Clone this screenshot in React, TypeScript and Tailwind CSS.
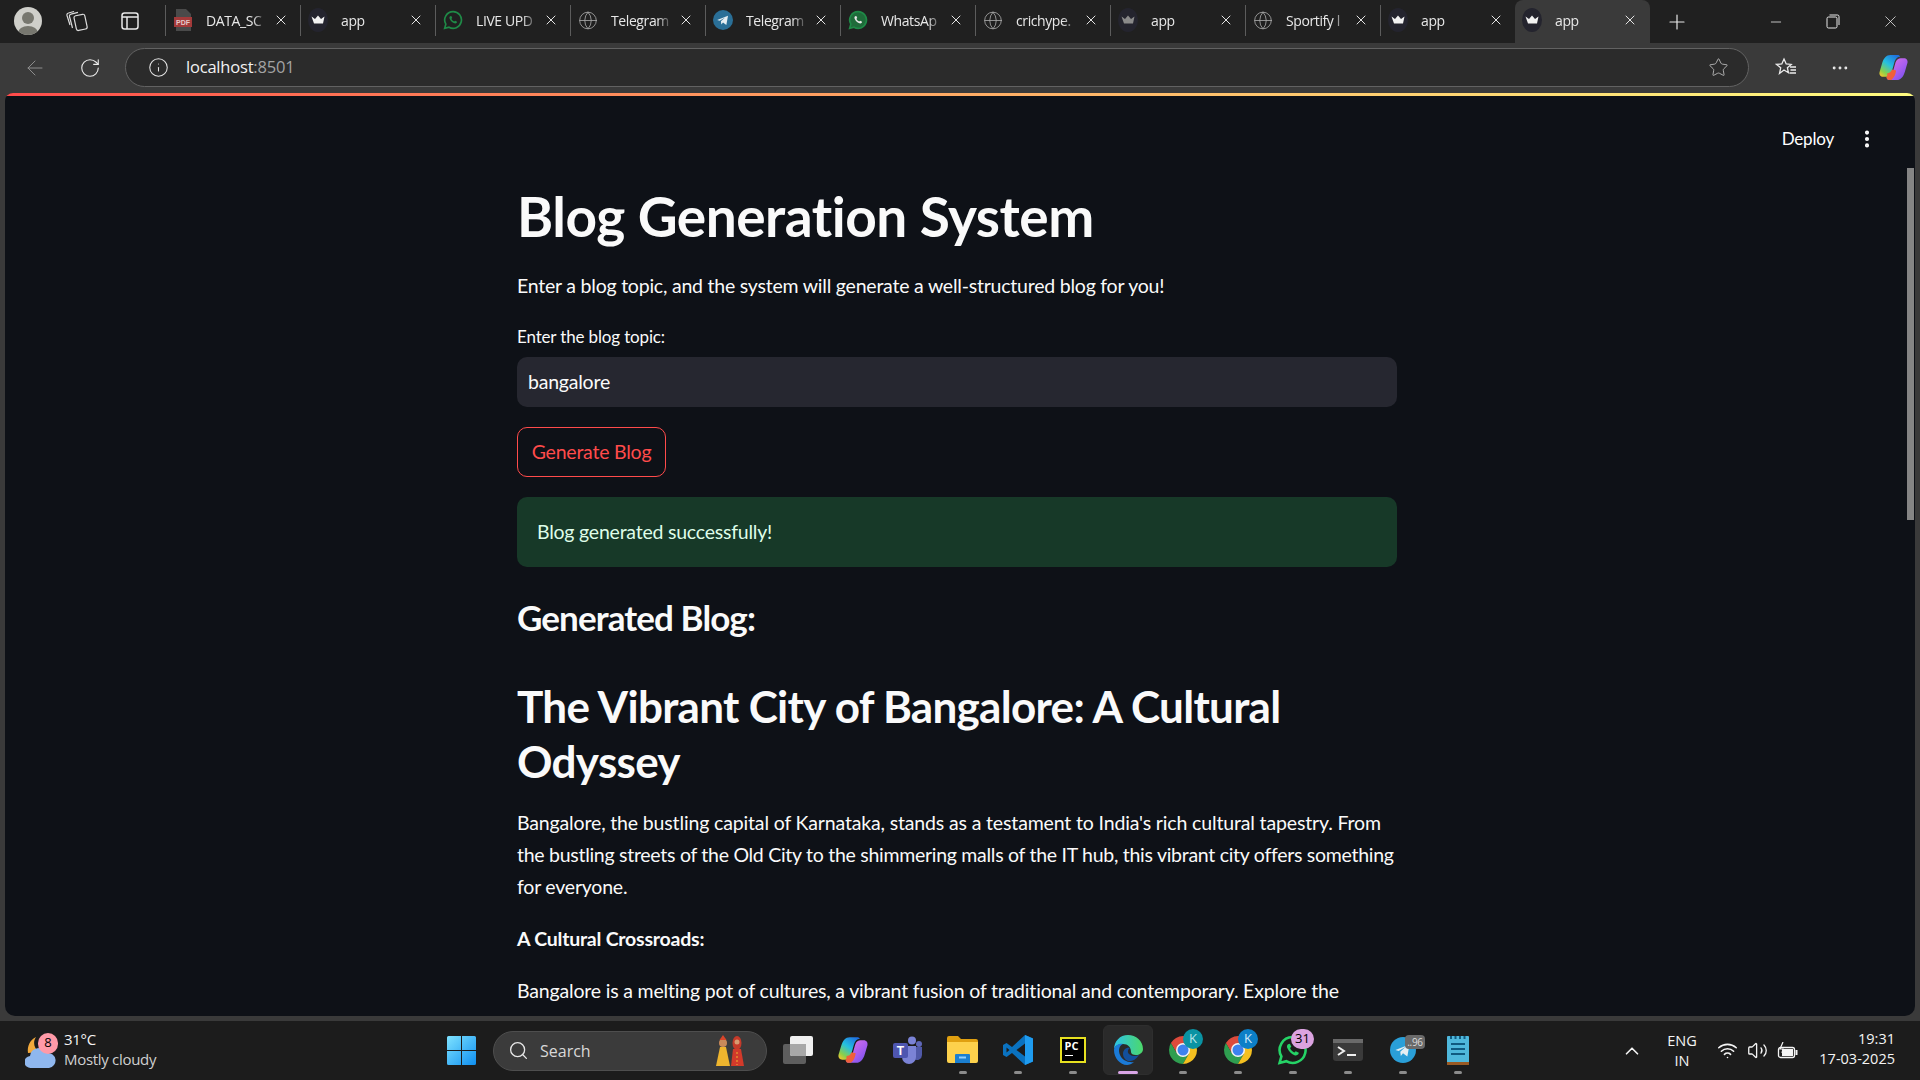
import React from 'react';
import { ArrowLeft, ChevronUp, Info, Minus, MoreHorizontal, MoreVertical, Plus, RotateCw, Search, Star, Volume2, Wifi, X, Globe } from 'lucide-react';

type TabIcon = 'pdf' | 'crown' | 'crownDim' | 'whatsapp' | 'globe' | 'telegram';

const tabs: { icon: TabIcon; title: string; active?: boolean }[] = [
    { icon: 'pdf', title: 'DATA_SC' },
    { icon: 'crown', title: 'app' },
    { icon: 'whatsapp', title: 'LIVE UPD' },
    { icon: 'globe', title: 'Telegram' },
    { icon: 'telegram', title: 'Telegram' },
    { icon: 'whatsapp', title: 'WhatsAp' },
    { icon: 'globe', title: 'crichype.' },
    { icon: 'crownDim', title: 'app' },
    { icon: 'globe', title: 'Sportify l' },
    { icon: 'crown', title: 'app' },
    { icon: 'crown', title: 'app', active: true },
];

function Crown({ dim }: { dim?: boolean }) {
    return (
        <svg width="20" height="24" viewBox="0 0 20 24">
            <ellipse cx="10" cy="12" rx="10" ry="12" fill="#24242e" />
            <path d="M3.5 8.500 7 11l3-3.500 3 3.500 3.500-2.500-1.500 7h-9z" fill={dim ? '#8a8a8a' : '#f2f2f2'} />
        </svg>
    );
}

function WhatsAppIcon({ size = 20, dim }: { size?: number; dim?: boolean }) {
    return (
        <svg width={size} height={size} viewBox="0 0 24 24">
            <path d="M12 2a10 10 0 0 0-8.600 15L2 22l5.200-1.300A10 10 0 1 0 12 2z" fill={dim ? '#1f6b3a' : 'none'} stroke="#1f8a47" strokeWidth="2" />
            <path d="M8.500 7.500c-.8.700-1 1.800-.5 3 1 2.500 3 4.500 5.500 5.500 1.200.4 2.300.2 3-.7l.4-1.200-2.400-1.200-1 1c-1.500-.6-2.800-1.900-3.400-3.400l1-1-1.100-2.400z" fill={dim ? '#e8e8e8' : '#1f8a47'} />
        </svg>
    );
}

function TelegramIcon({ size = 20, fill = '#2a6f97' }: { size?: number; fill?: string }) {
    return (
        <svg width={size} height={size} viewBox="0 0 24 24">
            <circle cx="12" cy="12" r="12" fill={fill} />
            <path d="M5 12l13-5-2 11-4-3-2 2.500-.5-4 5-4.500-6.500 4z" fill="#e6eef2" />
        </svg>
    );
}

function Favicon({ icon, index }: { icon: TabIcon; index: number }) {
    if (icon === 'pdf') {
        return (
            <svg width="18" height="24" viewBox="0 0 18 24">
                <path d="M2 1h10l5 5v17H2z" fill="#4a4a4a" />
                <rect x="0" y="9" width="18" height="10" fill="#a33a3a" />
                <text x="9" y="17" textAnchor="middle" fontSize="7" fontWeight="700" fill="#e6c8c8" fontFamily="Liberation Sans">PDF</text>
            </svg>
        );
    }
    if (icon === 'crown') return <Crown />;
    if (icon === 'crownDim') return <Crown dim />;
    if (icon === 'whatsapp') return <WhatsAppIcon dim={index === 5} />;
    if (icon === 'telegram') return <TelegramIcon />;
    return <Globe size={21} strokeWidth={1} className="text-[#a8a8a8]" />;
}

function BrowserTab({ icon, title, active, index }: { icon: TabIcon; title: string; active?: boolean; index: number }) {
    return (
        <div className={`relative flex h-full w-[135px] shrink-0 items-center pb-[3px] ${active ? 'rounded-t-lg bg-[#3a3a3a]' : ''}`}>
            {!active && <div className="h-[31px] w-px bg-[#5c5c5c]" />}
            <div className="ml-[7px] flex w-[20px] justify-center">
                <Favicon icon={icon} index={index} />
            </div>
            <span className="ml-[13px] w-[62px] whitespace-nowrap text-[14px] text-[#e8e8e8] [font-family:'Open_Sans',sans-serif] [mask-image:linear-gradient(90deg,#000_75%,transparent)] tracking-[-0.4px]">
                {title}
            </span>
            <X size={16} strokeWidth={1.5} className="ml-[5px] text-[#e4e4e4]" />
        </div>
    );
}

function TopBars() {
    return (
        <>
            <div className="flex h-[43px] shrink-0 items-center bg-[#202020]">
                <div className="flex h-full w-[165px] shrink-0 items-center pb-[1px]">
                    <div className="ml-[14px] flex h-[28px] w-[28px] items-end justify-center overflow-hidden rounded-full bg-[#cfcfca]">
                        <svg width="28" height="28" viewBox="0 0 28 28">
                            <circle cx="14" cy="11" r="6" fill="#77776f" />
                            <ellipse cx="14" cy="26" rx="10" ry="7" fill="#77776f" />
                        </svg>
                    </div>
                    <svg className="ml-[23px]" width="24" height="24" viewBox="0 0 24 24" fill="none" stroke="#dcdcdc" strokeWidth="1.200">
                        <rect x="10" y="6" width="11" height="15" rx="2" transform="rotate(-12 15 13)" />
                        <path d="M7.500 19 4.500 7.500a2 2 0 0 1 1.500-2.400l7-1.800" />
                        <path d="M5 16 2 6.500A2 2 0 0 1 3.500 4L9 2.500" />
                    </svg>
                    <svg className="ml-[32px]" width="18" height="18" viewBox="0 0 18 18" fill="none" stroke="#e8e8e8" strokeWidth="1.500">
                        <rect x="1" y="1" width="16" height="16" rx="2.500" />
                        <path d="M1 5h16M6 5v12" />
                    </svg>
                </div>
                {tabs.map((tab, i) => (
                    <BrowserTab key={i} index={i} {...tab} />
                ))}
                <Plus size={24} strokeWidth={1.2} className="ml-[15px] text-[#e8e8e8]" />
                <Minus size={16} strokeWidth={1.2} className="ml-[79px] text-[#e8e8e8]" />
                <svg className="ml-[42px]" width="14" height="15" viewBox="0 0 14 15" fill="none" stroke="#e8e8e8" strokeWidth="1">
                    <rect x="1" y="3" width="10" height="11" rx="1.500" />
                    <path d="M3.500 1h8a1.500 1.500 0 0 1 1.500 1.500V11" />
                </svg>
                <X size={19} strokeWidth={1} className="ml-[41px] text-[#e8e8e8]" />
            </div>
            <div className="flex h-[50px] shrink-0 items-center bg-[#3a3a3a] pb-[1px]">
                <ArrowLeft size={24} strokeWidth={1} className="ml-[23px] text-[#8d8d8d]" />
                <RotateCw size={22} strokeWidth={1.2} className="ml-[32px] text-[#ececec]" />
                <div className="ml-[24px] flex h-[39px] w-[1624px] items-center rounded-full border border-[#626262] bg-[#2b2b2b]">
                    <Info size={21} strokeWidth={1.200} className="ml-[22px] text-[#e4e4e4]" />
                    <span className="ml-[17px] text-[16.500px] tracking-[-0.2px] [font-family:'Open_Sans',sans-serif] text-[#f2f2f2]">
                        localhost<span className="text-[#a3a3a3]">:8501</span>
                    </span>
                    <Star size={21} strokeWidth={1} className="ml-auto mr-[19px] text-[#bdbdbd]" />
                </div>
                <svg className="ml-[26px]" width="22" height="22" viewBox="0 0 22 22" fill="none" stroke="#ececec" strokeWidth="1.300">
                    <path d="M9 2l2.200 5 5 .4-3.800 3.300 1 5L9 13l-4.500 3.500 1.200-5.700L1.500 7.400l5.300-.4z" />
                    <path d="M15 10h6M15.500 13h5.500M14.500 16h6.500" />
                </svg>
                <MoreHorizontal size={20} strokeWidth={1.5} className="ml-[33px] text-[#ececec]" />
                <div className="ml-[29px]">
                    <CopilotIcon size={29} id="cpTop" />
                </div>
            </div>
        </>
    );
}

function CopilotIcon({ size, id }: { size: number; id: string }) {
    return (
        <svg width={size} height={size} viewBox="0 0 28 28">
            <defs>
                <linearGradient id={`${id}a`} x1="0.8" y1="0" x2="0.1" y2="1">
                    <stop offset="0" stopColor="#1f6fe0" />
                    <stop offset="0.45" stopColor="#25c0e0" />
                    <stop offset="0.8" stopColor="#8ad04a" />
                    <stop offset="1" stopColor="#f5c52c" />
                </linearGradient>
                <linearGradient id={`${id}b`} x1="0" y1="0" x2="1" y2="1">
                    <stop offset="0" stopColor="#e676e2" />
                    <stop offset="0.6" stopColor="#a45cf0" />
                    <stop offset="1" stopColor="#6a50e8" />
                </linearGradient>
            </defs>
            <path d="M11 2h7c1 0 2 .6 2.500 1.500-3 0-4.500 2-5.500 5L12 19c-1 3-3 4-5 4H4c-2.500 0-4-2-3.500-4.500L3 10C4.500 5 7 2 11 2z" fill={`url(#${id}a)`} />
            <path d="M17 26h-7c-1 0-2-.6-2.500-1.500 3 0 4.500-2 5.500-5l3-10.500c1-3 3-4 5-4h3c2.500 0 4 2 3.500 4.500L25 18c-1.500 5-4 8-8 8z" fill={`url(#${id}b)`} />
            <path d="M8 19.500c2 0 3.500-1 4.500-3.500l4 1c-.5 4-2 7-4.500 9h-2c-1.500 0-2.500-1-3-2.500 1-.5 1-2.500 1-4z" fill="#f0603a" />
        </svg>
    );
}

function StreamlitPage() {
    return (
        <div className="relative min-h-0 flex-1 overflow-hidden rounded-t-[8px] rounded-b-[10px] bg-[#0e1117]">
            <div className="h-[3px] bg-gradient-to-r from-[#ff4b4b] to-[#fffd80]" />

            {/* Streamlit toolbar floats over the content */}
            <div className="absolute right-[37px] top-[33px] flex items-center text-white">
                <span className="text-[17px] tracking-[-0.2px] [font-family:'Lato',sans-serif]">Deploy</span>
                <MoreVertical size={22} strokeWidth={2.500} className="ml-[22px]" />
            </div>
            <div className="absolute right-[1px] top-[75px] h-[352px] w-[7px] bg-[#858585]" />

            <div className="ml-[512px] w-[880px] pt-[85px] text-[19.500px] leading-[32px] tracking-[-0.22px] text-[#fafafa] [font-family:'Lato',sans-serif] [font-variant-ligatures:none]">
                <h1 className="text-[55px] font-bold leading-[70px] tracking-[-0.5px]">Blog Generation System</h1>
                <p className="mt-[19px]">Enter a blog topic, and the system will generate a well-structured blog for you!</p>
                <label className="mt-[24px] block text-[17px] leading-[22px] tracking-[-0.15px]">Enter the blog topic:</label>
                <div className="mt-[9px] flex h-[50px] items-center rounded-[10px] bg-[#262730] pl-[11px]">bangalore</div>
                <button className="mt-[20px] block h-[50px] w-[149px] rounded-[10px] border border-[#ff4b4b] text-[#ff4b4b]">Generate Blog</button>
                <div className="mt-[20px] flex h-[70px] items-center rounded-[10px] bg-[#173928] pl-[20px] text-[#dffde9]">Blog generated successfully!</div>
                <h3 className="mt-[28px] text-[35px] font-bold leading-[44px] tracking-[-0.9px]">Generated Blog:</h3>
                <h2 className="mt-[40px] text-[44px] font-bold leading-[54.500px] tracking-[-0.7px]">The Vibrant City of Bangalore: A Cultural Odyssey</h2>
                <p className="mt-[19px] whitespace-nowrap">
                    <span className="tracking-[-0.15px]">Bangalore, the bustling capital of Karnataka, stands as a testament to India's rich cultural tapestry. From</span>
                    <br />
                    <span className="tracking-[-0.28px]">the bustling streets of the Old City to the shimmering malls of the IT hub, this vibrant city offers something</span>
                    <br />
                    for everyone.
                </p>
                <p className="mt-[20px] font-bold">A Cultural Crossroads:</p>
                <p className="mt-[20px] tracking-[-0.18px]">
                    Bangalore is a melting pot of cultures, a vibrant fusion of traditional and contemporary. Explore the majestic temples of the old city and the lively markets, or admire the colonial architecture of its gardens.
                </p>
            </div>
        </div>
    );
}

function Dot({ active }: { active?: boolean }) {
    return <div className={`absolute bottom-[6px] left-1/2 h-[3px] -translate-x-1/2 rounded-full ${active ? 'w-[20px] bg-[#d9a5e6]' : 'w-[8px] bg-[#8b8b8b]'}`} />;
}

function Pill({ text, color, textColor = 'text-black', className = 'left-[30px]' }: { text: string; color: string; textColor?: string; className?: string }) {
    return (
        <div className={`absolute top-[8px] flex h-[20px] w-[20px] items-center justify-center rounded-full text-[13px] ${color} ${textColor} ${className}`}>
            {text}
        </div>
    );
}

function ChromeIcon() {
    return (
        <svg width="30" height="30" viewBox="0 0 30 30">
            <path d="M2.880 8A14 14 0 0 1 27.120 8H15L8.940 18.500Z" fill="#dd4a3c" />
            <path d="M2.880 8A14 14 0 0 0 15 29L21.060 18.500 8.940 18.500Z" fill="#2f9e50" />
            <path d="M15 29A14 14 0 0 0 27.120 8H15L21.060 18.500Z" fill="#f4c020" />
            <circle cx="15" cy="15" r="7" fill="#f4f4f4" />
            <circle cx="15" cy="15" r="5.500" fill="#3d82ee" />
        </svg>
    );
}

function TaskSlot({ children, dot = true }: { children: React.ReactNode; dot?: boolean }) {
    return (
        <div className="relative flex h-full w-[55px] shrink-0 items-center justify-center pb-[2px]">
            {children}
            {dot && <Dot />}
        </div>
    );
}

function Taskbar() {
    return (
        <div className="flex h-[59px] shrink-0 items-center bg-[#1c1c1c] text-[#f4f4f4] [font-family:'Open_Sans',sans-serif]">
            {/* weather */}
            <div className="relative ml-[25px] h-[36px] w-[32px] shrink-0">
                <svg width="31" height="36" viewBox="0 0 31 36">
                    <path d="M11 4a10 10 0 0 0 4 15l-12 1C2 13 5 7 11 4z" fill="#f2a93b" />
                    <path d="M6 35a6 6 0 0 1-1-12 9 9 0 0 1 17-3 7.500 7.500 0 0 1 2 15z" fill="#8fb7ee" />
                </svg>
                <div className="absolute left-[13px] top-0 flex h-[21px] w-[20px] items-center justify-center rounded-full bg-[#ff9aa8] text-[13px] text-black">8</div>
            </div>
            <div className="ml-[7px] mb-[4px] w-[100px] shrink-0 text-[15px] leading-[20px] tracking-[-0.3px]">
                <div>31°C</div>
                <div className="text-[#d0d0d0]">Mostly cloudy</div>
            </div>

            {/* start + search */}
            <svg className="ml-[283px] shrink-0" width="29" height="29" viewBox="0 0 29 29">
                <defs>
                    <linearGradient id="win" x1="0" y1="0" x2="1" y2="1">
                        <stop offset="0" stopColor="#7fe3ff" />
                        <stop offset="1" stopColor="#0f8ff0" />
                    </linearGradient>
                </defs>
                <path d="M0 1.500A1.500 1.500 0 0 1 1.500 0H14v14H0zM15 0h12.500A1.500 1.500 0 0 1 29 1.500V14H15zM0 15h14v14H1.500A1.500 1.500 0 0 1 0 27.500zM15 15h14v12.500a1.500 1.500 0 0 1-1.500 1.500H15z" fill="url(#win)" />
            </svg>
            <div className="ml-[17px] flex h-[40px] w-[274px] shrink-0 items-center rounded-full border border-[#4e4e4e] bg-[#3b3b3b]">
                <Search size={21} strokeWidth={1.500} className="ml-[14px] text-[#e8e8e8]" />
                <span className="ml-[11px] text-[16px] text-[#d8d8d8]">Search</span>
                <svg className="ml-auto mr-[20px]" width="32" height="34" viewBox="0 0 32 34">
                    <circle cx="9" cy="9" r="4" fill="#c98a5a" />
                    <path d="M9 1l3.500 5h-7z" fill="#d8452a" />
                    <path d="M6 13h6l4 19H2z" fill="#eeb52e" />
                    <ellipse cx="23" cy="9" rx="4.500" ry="7" fill="#c53a2a" />
                    <circle cx="23" cy="8" r="2.500" fill="#d89a70" />
                    <path d="M19 15h8l3 17H17z" fill="#d23a2a" />
                    <path d="M23 18v13" stroke="#eeb52e" strokeWidth="1" strokeDasharray="2 2" />
                </svg>
            </div>

            {/* pinned apps */}
            <div className="ml-[3px] flex h-full shrink-0">
                <TaskSlot dot={false}>
                    <svg width="30" height="28" viewBox="0 0 30 28">
                        <rect x="0" y="8" width="23" height="20" rx="2" fill="#5e5e5e" />
                        <rect x="7" y="0" width="23" height="20" rx="2" fill="#f0f0f0" />
                        <path d="M7 8h16v12H9a2 2 0 0 1-2-2z" fill="#a8a8a8" />
                    </svg>
                </TaskSlot>
                <TaskSlot dot={false}>
                    <CopilotIcon size={30} id="cpBar" />
                </TaskSlot>
                <TaskSlot dot={false}>
                    <svg width="30" height="30" viewBox="0 0 30 30">
                        <circle cx="19" cy="5.500" r="4" fill="#7b83d6" />
                        <circle cx="26" cy="9" r="3" fill="#5f67b8" />
                        <path d="M21 12h8v8a5 5 0 0 1-8 4z" fill="#5059a8" />
                        <path d="M9 11h14v11a7 7 0 0 1-14 0z" fill="#7b83d6" />
                        <rect x="0" y="8" width="15" height="15" rx="2" fill="#4e56b0" />
                        <text x="7.500" y="19.500" textAnchor="middle" fontSize="12" fontWeight="700" fill="#fff" fontFamily="Liberation Sans">T</text>
                    </svg>
                </TaskSlot>
                <TaskSlot>
                    <svg width="31" height="27" viewBox="0 0 31 27">
                        <path d="M0 2a2 2 0 0 1 2-2h9l3 3h15a2 2 0 0 1 2 2v5H0z" fill="#e0a010" />
                        <path d="M0 6h31v19a2 2 0 0 1-2 2H2a2 2 0 0 1-2-2z" fill="#fdd14c" />
                        <path d="M9 18h13a1 1 0 0 1 1 1v8H8v-8a1 1 0 0 1 1-1z" fill="#1b7fd0" />
                        <rect x="12" y="20.500" width="7" height="2" fill="#8fd0ff" />
                    </svg>
                </TaskSlot>
                <TaskSlot>
                    <svg width="30" height="30" viewBox="0 0 30 30">
                        <path fillRule="evenodd" d="M22 0 9 12 3.500 8 0 10v10l3.500 2L9 18l13 12 8-3.500v-23zM22 8.500v13L13.500 15zM3.500 12.500 6.500 15l-3 2.500z" fill="#0a72c0" />
                        <path fillRule="evenodd" d="M22 0l8 3.500v23L22 30v-8.500L22 8.500z" fill="#1f9cf0" />
                    </svg>
                </TaskSlot>
                <TaskSlot>
                    <div className="flex h-[26px] w-[26px] flex-col border-[2px] border-[#e7e020] bg-black pl-[3px] pt-[1px] text-[11px] font-bold leading-[12px] text-white">
                        PC
                        <div className="mt-[3px] h-[1.500px] w-[8px] bg-white" />
                    </div>
                </TaskSlot>
                <div className="relative flex h-full w-[55px] shrink-0 items-center justify-center pb-[2px]">
                    <div className="flex h-[50px] w-[50px] items-center justify-center rounded-md border border-[#2e2e2e] bg-[#2a2a2a]">
                        <svg width="30" height="32" viewBox="0 0 30 32">
                            <defs>
                                <linearGradient id="edgeA" x1="0" y1="0" x2="1" y2="0">
                                    <stop offset="0" stopColor="#2dc2e8" />
                                    <stop offset="1" stopColor="#4cd96a" />
                                </linearGradient>
                            </defs>
                            <path d="M1 16C1 7 7 1 15 1c8 0 15 6 15 14 0 4-4 6-7 6-3 0-5-1-5-3 0-5-3-8-8-8-4 0-9 2-9 6z" fill="url(#edgeA)" />
                            <path d="M1 16c0-4 5-7 9-6-4 2-5 6-3 11s8 8 14 7c-2 2-5 3-7 3C7 31 1 24 1 16z" fill="#1b7bd8" />
                            <path d="M10 20c0-4 3-7 7-6-2 1-3 4-1 6s6 3 10 1c-3 5-8 7-11 6-3-1-5-4-5-7z" fill="#124f9c" />
                        </svg>
                    </div>
                    <Dot active />
                </div>
                <TaskSlot>
                    <ChromeIcon />
                    <Pill text="K" color="bg-[#0a93a3]" textColor="text-[#b9e6ea]" className="left-[28px]" />
                </TaskSlot>
                <TaskSlot>
                    <ChromeIcon />
                    <Pill text="K" color="bg-[#0c7fc7]" textColor="text-[#cfe9fa]" className="left-[28px]" />
                </TaskSlot>
                <TaskSlot>
                    <svg width="31" height="32" viewBox="0 0 24 24">
                        <path d="M12 2a10 10 0 0 0-8.600 15L2 22l5.200-1.300A10 10 0 1 0 12 2z" fill="none" stroke="#25d366" strokeWidth="2" />
                        <path d="M8.500 7.500c-.8.700-1 1.800-.5 3 1 2.500 3 4.500 5.500 5.500 1.200.4 2.300.2 3-.7l.4-1.200-2.400-1.200-1 1c-1.500-.6-2.800-1.900-3.400-3.400l1-1-1.100-2.400z" fill="#25d366" />
                    </svg>
                    <Pill text="31" color="bg-[#dba3e0]" className="left-[26px] w-[23px]" />
                </TaskSlot>
                <TaskSlot>
                    <svg width="30" height="26" viewBox="0 0 30 26">
                        <rect width="30" height="22" y="2" rx="3" fill="#3a3a3a" />
                        <rect width="30" height="4" y="2" fill="#6a6a6a" />
                        <path d="M5 10l6 4-6 4" fill="none" stroke="#f0f0f0" strokeWidth="2" />
                        <path d="M14 18h9" stroke="#f0f0f0" strokeWidth="2" />
                    </svg>
                </TaskSlot>
                <TaskSlot>
                    <TelegramIcon size={26} fill="#2a9fd8" />
                    <div className="absolute left-[30px] top-[14px] flex h-[14px] w-[20px] items-center justify-center rounded-sm bg-[#6a6a6a] text-[10px] tracking-[-0.3px] text-[#dcdcdc]">..96</div>
                </TaskSlot>
                <TaskSlot>
                    <svg width="22" height="30" viewBox="0 0 22 30">
                        <rect x="0" y="1" width="22" height="28" rx="1" fill="#4fb8dc" />
                        <rect x="0" y="27" width="22" height="3" fill="#9a5a24" />
                        <path d="M4 9h14M4 14h14M4 19h14" stroke="#105a80" strokeWidth="2" />
                        <path d="M3 2.500h16" stroke="#105a80" strokeWidth="3" strokeDasharray="2 2.500" />
                    </svg>
                </TaskSlot>
            </div>

            {/* tray */}
            <ChevronUp size={22} strokeWidth={1.800} className="ml-[136px] shrink-0" />
            <div className="ml-[11px] w-[56px] shrink-0 text-center text-[14.500px] leading-[20px]">
                <div>ENG</div>
                <div>IN</div>
            </div>
            <Wifi size={21} strokeWidth={1.800} className="ml-[7px] shrink-0" />
            <Volume2 size={21} strokeWidth={1.500} className="ml-[9px] shrink-0" />
            <svg className="ml-[9px] shrink-0" width="21" height="18" viewBox="0 0 21 18" fill="none">
                <rect x="1.500" y="5.500" width="16" height="10" rx="2" fill="#1c1c1c" stroke="#f4f4f4" strokeWidth="1.300" />
                <rect x="5" y="7" width="11" height="7" fill="#f4f4f4" />
                <rect x="18.500" y="8" width="2" height="5" fill="#f4f4f4" />
                <path d="M6 0L3 7h3l-1 4" stroke="#f4f4f4" strokeWidth="1.200" />
            </svg>
            <div className="ml-auto mb-[3px] mr-[25px] text-right text-[14.500px] leading-[20px]">
                <div>19:31</div>
                <div>17-03-2025</div>
            </div>
        </div>
    );
}

export default function App() {
    return (
        <div className="flex h-screen w-screen flex-col overflow-hidden bg-[#3a3a3a]">
            <TopBars />
            <div className="flex min-h-0 flex-1 flex-col pb-[5px] pl-[5px] pr-[5px]">
                <StreamlitPage />
            </div>
            <Taskbar />
        </div>
    );
}
